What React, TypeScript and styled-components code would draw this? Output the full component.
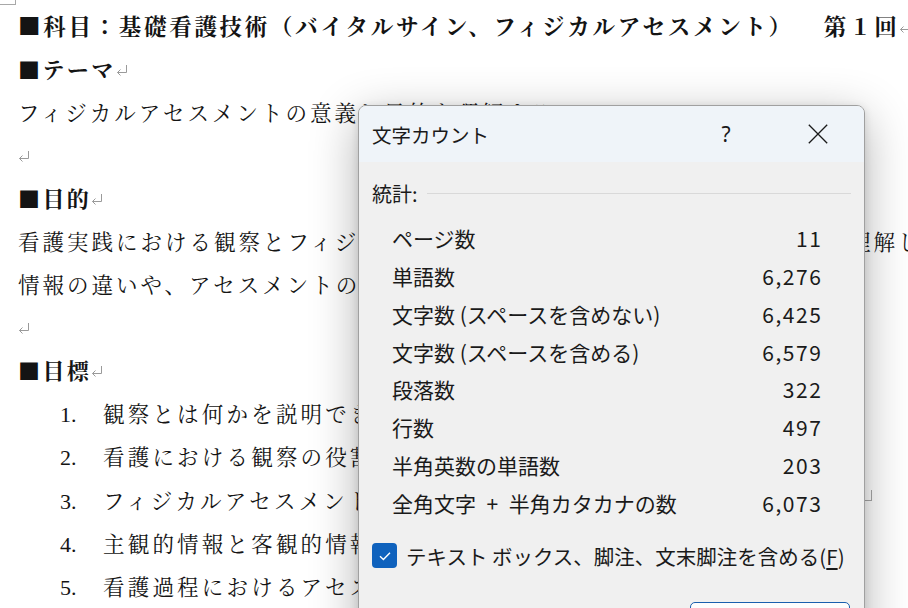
import React from "react";
import styled, { createGlobalStyle } from "styled-components";

const Global = createGlobalStyle`
  html, body { margin: 0; padding: 0; background: #fff; overflow: hidden; }
  body { width: 908px; height: 608px; }
`;

const Page = styled.div`
  position: relative;
  width: 908px;
  height: 608px;
  overflow: hidden;
  background: #fff;
`;

const Doc = styled.div`
  padding: 3.5px 0 0 18px;
  font-family: "Noto Serif CJK JP", "Noto Sans CJK JP", serif;
  color: #141414;
  white-space: nowrap;
`;

const TitleLine = styled.div`
  height: 43.1px;
  line-height: 43.1px;
  font-size: 22.5px;
  font-weight: 700;
  letter-spacing: 2.7px;
`;

const Heading = styled.div`
  height: 43.1px;
  line-height: 43.1px;
  font-size: 22px;
  font-weight: 700;
  letter-spacing: 2.4px;
`;

const Para = styled.div`
  height: 43.1px;
  line-height: 43.1px;
  font-size: 21.5px;
  letter-spacing: 3px;
`;

const Item = styled.div`
  height: 43.1px;
  line-height: 43.1px;
  font-size: 21.5px;
  letter-spacing: 3.2px;
  padding-left: 42px;
  display: flex;
  align-items: baseline;
`;

const ItemNum = styled.span`
  width: 43px;
  flex: none;
  font-family: "Liberation Serif", serif;
  font-size: 22px;
  letter-spacing: 0;
`;

const Gap = styled.span<{ $w: number }>`
  display: inline-block;
  width: ${(p) => p.$w}px;
`;

const RetSvg = styled.svg`
  width: 12px;
  height: 12px;
  vertical-align: 2px;
`;

const Ret = () => (
  <RetSvg viewBox="0 0 12 12" fill="none" stroke="#9a9a9a" strokeWidth="1">
    <path d="M10.5 1 V8.5 H1.5" />
    <path d="M4.5 5.5 L1.5 8.5 L4.5 11.5" />
  </RetSvg>
);

const CornerTL = styled.div`
  position: absolute;
  left: 0;
  top: 0;
  width: 15px;
  height: 4px;
  border-right: 1px solid #a8a8a8;
  border-bottom: 1px solid #a8a8a8;
`;

const CornerR = styled.div`
  position: absolute;
  left: 862px;
  top: 490px;
  width: 9px;
  height: 10px;
  border-right: 1px solid #a8a8a8;
  border-bottom: 1px solid #a8a8a8;
`;

const Dialog = styled.div`
  position: absolute;
  left: 358px;
  top: 105px;
  width: 507px;
  height: 560px;
  box-sizing: border-box;
  border: 1px solid #a0a0a0;
  border-radius: 8px;
  background: #f0f0f0;
  box-shadow: 0 12px 48px rgba(0, 0, 0, 0.3), 0 2px 8px rgba(0, 0, 0, 0.12);
  overflow: hidden;
  font-family: "Noto Sans CJK JP", sans-serif;
  color: #1a1a1a;
  display: flex;
  flex-direction: column;
`;

const TitleBar = styled.div`
  height: 56px;
  flex: none;
  background: #eff4f9;
  display: flex;
  align-items: center;
  padding-left: 13px;
`;

const DlgTitle = styled.div`
  flex: 1;
  font-size: 19.5px;
`;

const TitleBtn = styled.div`
  width: 92px;
  height: 56px;
  display: flex;
  align-items: center;
  justify-content: center;
  font-size: 21px;
  font-family: "Noto Sans", sans-serif;
`;

const Body = styled.div`
  flex: 1;
  padding: 18px 13px 0 13px;
  display: flex;
  flex-direction: column;
`;

const StatsHeader = styled.div`
  height: 26px;
  display: flex;
  align-items: center;
  gap: 9px;
  font-size: 20px;
`;

const Rule = styled.div`
  flex: 1;
  height: 1px;
  background: #d9d9d9;
`;

const Rows = styled.div`
  margin-top: 13px;
  padding: 0 30px 0 20px;
`;

const Row = styled.div`
  height: 37.86px;
  display: flex;
  align-items: center;
  justify-content: space-between;
  font-size: 21px;
  white-space: nowrap;
`;

const Value = styled.span`
  letter-spacing: 1.6px;
  margin-right: -1.6px;
`;

const CheckRow = styled.div`
  margin-top: 19px;
  height: 30px;
  display: flex;
  align-items: center;
  gap: 9px;
  font-size: 20.5px;
  white-space: nowrap;
`;

const CheckBox = styled.div`
  width: 25px;
  height: 25px;
  flex: none;
  border-radius: 4px;
  background: #0f62bd;
  display: flex;
  align-items: center;
  justify-content: center;
`;

const Accel = styled.span`
  text-decoration: underline;
  text-underline-offset: 3px;
`;

const Button = styled.div`
  margin-top: 31px;
  align-self: flex-end;
  margin-right: 1px;
  width: 160px;
  height: 40px;
  box-sizing: border-box;
  background: #fdfdfd;
  border: 1px solid #1a5fae;
  border-radius: 5px;
`;

const stats: [string, string][] = [
  ["ページ数", "11"],
  ["単語数", "6,276"],
  ["文字数 (スペースを含めない)", "6,425"],
  ["文字数 (スペースを含める)", "6,579"],
  ["段落数", "322"],
  ["行数", "497"],
  ["半角英数の単語数", "203"],
  ["全角文字\u2002+\u2002半角カタカナの数", "6,073"],
];

const goals = [
  "観察とは何かを説明できる。",
  "看護における観察の役割を述べることができる。",
  "フィジカルアセスメントの目的を説明できる。",
  "主観的情報と客観的情報の違いを説明できる。",
  "看護過程におけるアセスメントの位置づけを理解する。",
];

export default function App() {
  return (
    <Page>
      <Global />
      <CornerTL />
      <CornerR />
      <Doc>
        <TitleLine>
          ■科目：基礎看護技術（バイタルサイン、フィジカルアセスメント）
          <Gap $w={30} />
          第１回
          <Ret />
        </TitleLine>
        <Heading>
          ■テーマ
          <Ret />
        </Heading>
        <Para>
          フィジカルアセスメントの意義と目的を理解する
          <Ret />
        </Para>
        <Para>
          <Ret />
        </Para>
        <Heading>
          ■目的
          <Ret />
        </Heading>
        <Para>看護実践における観察とフィジカルアセスメントの重要性と基本的な目的を理解し、</Para>
        <Para>
          情報の違いや、アセスメントの意義を学ぶ。
          <Ret />
        </Para>
        <Para>
          <Ret />
        </Para>
        <Heading>
          ■目標
          <Ret />
        </Heading>
        {goals.map((g, i) => (
          <Item key={i}>
            <ItemNum>{i + 1}.</ItemNum>
            <span>{g}</span>
          </Item>
        ))}
      </Doc>

      <Dialog>
        <TitleBar>
          <DlgTitle>文字カウント</DlgTitle>
          <TitleBtn>?</TitleBtn>
          <TitleBtn>
            <svg width="20" height="20" viewBox="0 0 20 20" fill="none" stroke="#1a1a1a" strokeWidth="1.3">
              <path d="M0.8 0.8 L19.2 19.2 M19.2 0.8 L0.8 19.2" />
            </svg>
          </TitleBtn>
        </TitleBar>
        <Body>
          <StatsHeader>
            <span>統計:</span>
            <Rule />
          </StatsHeader>
          <Rows>
            {stats.map(([k, v]) => (
              <Row key={k}>
                <span>{k}</span>
                <Value>{v}</Value>
              </Row>
            ))}
          </Rows>
          <CheckRow>
            <CheckBox>
              <svg width="16" height="16" viewBox="0 0 16 16" fill="none" stroke="#fff" strokeWidth="1.4">
                <path d="M3 8.3 L6.4 11.5 L13 4.8" />
              </svg>
            </CheckBox>
            <span>
              テキスト ボックス、脚注、文末脚注を含める(<Accel>F</Accel>)
            </span>
          </CheckRow>
          <Button />
        </Body>
      </Dialog>
    </Page>
  );
}
